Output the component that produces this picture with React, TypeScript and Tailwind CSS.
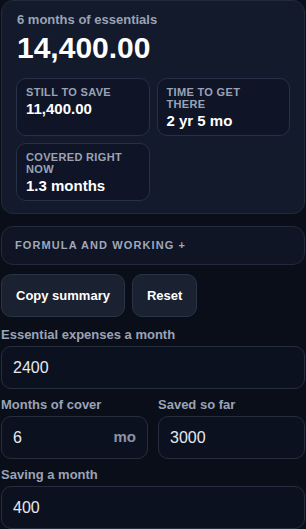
import { useState } from "react";

const font = { fontFamily: '"Liberation Sans", Arial, sans-serif' };

function Stat({ label, value }: { label: string; value: string }) {
  return (
    <div className="flex flex-col rounded-[10px] border border-[#263047] bg-[#0f1526] px-[9px] pb-[5px] pt-[7px]">
      <p className="text-[11px] font-semibold uppercase leading-[12px] tracking-[0.03em] text-[#9aa3b6]">{label}</p>
      <p className="mt-[2px] text-[15px] font-bold leading-[18px] text-white">{value}</p>
    </div>
  );
}

function Field({ label, value, suffix }: { label: string; value: string; suffix?: string }) {
  return (
    <label className="flex flex-col">
      <span className="text-[13px] font-bold leading-[16px] text-[#9aa3b6]">{label}</span>
      <div className="mt-[3px] flex h-[43px] items-center rounded-[10px] border border-[#252d3f] bg-[#0c1120] px-[11px]">
        <input
          defaultValue={value}
          className="w-full min-w-0 bg-transparent text-[16px] text-[#e6e9ef] outline-none"
          style={font}
        />
        {suffix && <span className="ml-2 text-[15px] font-bold text-[#8b93a5]">{suffix}</span>}
      </div>
    </label>
  );
}

export default function App() {
  const [open, setOpen] = useState(false);

  return (
    <main className="min-h-screen bg-[#0a0e19] px-px" style={font}>
      <section className="rounded-[12px] border border-[#222a3c] bg-[#121a2b] px-[14px] pb-[12px] pt-[11px]">
        <p className="ml-px text-[13px] font-semibold leading-[16px] text-[#9aa3b6]">6 months of essentials</p>
        <p className="ml-px mt-[3px] text-[30px] font-bold leading-[34px] text-white">14,400.00</p>
        <div className="mt-[13px] grid grid-cols-2 gap-[7px]">
          <Stat label="Still to save" value="11,400.00" />
          <Stat label="Time to get there" value="2 yr 5 mo" />
          <Stat label="Covered right now" value="1.3 months" />
        </div>
      </section>

      <button
        onClick={() => setOpen(!open)}
        className="mt-[12px] flex h-[39px] w-full items-center rounded-[12px] border border-[#222a3c] bg-[#0f1524] px-[13px] text-left text-[11px] font-bold uppercase tracking-[0.1em] text-[#a0a8b9]"
      >
        Formula and working +
      </button>

      <div className="mt-[9px] flex gap-[7px]">
        <button className="h-[43px] rounded-[10px] border border-[#2a3346] bg-[#1a2131] px-[14px] text-[13px] font-bold text-white">
          Copy summary
        </button>
        <button className="h-[43px] rounded-[10px] border border-[#2a3346] bg-[#1a2131] px-[14px] text-[13px] font-bold text-white">
          Reset
        </button>
      </div>

      <div className="mt-[10px] flex flex-col gap-[8px] pb-px">
        <Field label="Essential expenses a month" value="2400" />
        <div className="grid grid-cols-2 gap-[10px]">
          <Field label="Months of cover" value="6" suffix="mo" />
          <Field label="Saved so far" value="3000" />
        </div>
        <Field label="Saving a month" value="400" />
      </div>
    </main>
  );
}
